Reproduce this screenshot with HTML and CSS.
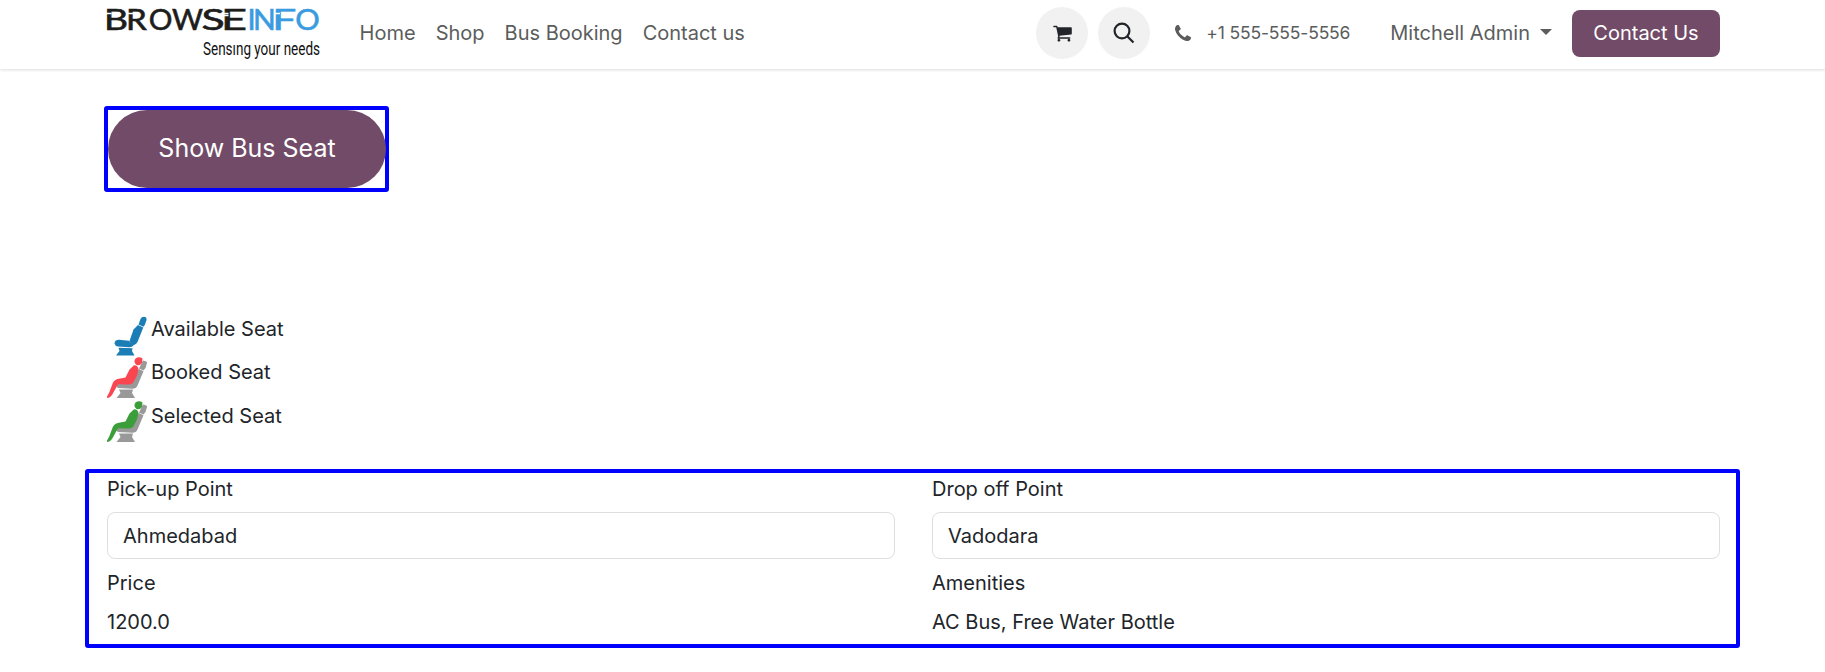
FILE: index.html
```html
<!DOCTYPE html>
<html lang="en">
<head>
<meta charset="utf-8">
<title>Bus Booking</title>
<link rel="stylesheet" href="styles.css">
</head>
<body>
<svg class="sprites" width="0" height="0">
  <symbol id="occupied" viewBox="0 0 40 42">
    <g fill="#999">
      <path d="M36 3.500Q40.500 4 40 6L38.500 11L36.500 13.500L32 11.500Z"/>
      <path d="M32 12L36.500 14.200L30.500 28.500Q29 32 25 31.800L11 31Q9 30 9.500 26.500L24 27Z"/>
      <path d="M12 32.500H26L25 36L28 41H9.500L13.500 36Z"/>
    </g>
    <g fill="currentColor">
      <path d="M28.500 1.500Q32-1 35.500 1.500L35 6Q33 9 29.500 8Q26 5.500 28.500 1.500Z"/>
      <path d="M27 8.300Q31.500 8.500 31.500 12.500L30 18.500L26 26Q24 28 19 27.500L11 27.200L5 38Q2.500 41.500 0 40.800L0 39.500L2 36L6 25.500Q8 22 13 21.500L18.500 20.500L22.500 12.500Z"/>
    </g>
  </symbol>
</svg>
<header class="site-header">
  <a class="brand">
    <svg width="214" height="56" viewBox="0 0 214 56">
      <g class="brand-name">
        <text x="-3" y="25.700" textLength="24" lengthAdjust="spacingAndGlyphs">B</text>
        <text x="18.900" y="25.700" textLength="20.800" lengthAdjust="spacingAndGlyphs">R</text>
        <text x="41.700" y="25.700" textLength="23.700" lengthAdjust="spacingAndGlyphs">O</text>
        <text x="65" y="25.700" textLength="31" lengthAdjust="spacingAndGlyphs">W</text>
        <text x="94.500" y="25.700" textLength="23.200" lengthAdjust="spacingAndGlyphs">S</text>
        <text x="114" y="25.700" textLength="26" lengthAdjust="spacingAndGlyphs">E</text>
      </g>
      <g class="brand-name brand-info">
        <text x="140.500" y="25.700">I</text>
        <text x="146.100" y="25.700" textLength="22.800" lengthAdjust="spacingAndGlyphs">N</text>
        <text x="165.200" y="25.700" textLength="24" lengthAdjust="spacingAndGlyphs">F</text>
        <text x="188.300" y="25.700" textLength="24.500" lengthAdjust="spacingAndGlyphs">O</text>
      </g>
      <path class="brand-cut" d="M-1 9.500H4.500M21 9.500H26M115 9.500H121.500M115 11.500H121.500M167 9.500H173"/>
      <text class="brand-tag" x="96" y="50.500" textLength="117" lengthAdjust="spacingAndGlyphs">Sensıng your needs</text>
    </svg>
  </a>
  <nav class="menu">
    <a>Home</a><a>Shop</a><a>Bus Booking</a><a>Contact us</a>
  </nav>
  <div class="tools">
    <a class="round">
      <svg width="19" height="20" viewBox="0 0 1664 1792"><path fill="#212529" d="M640 1536q0 52-38 90t-90 38-90-38-38-90 38-90 90-38 90 38 38 90zm896 0q0 52-38 90t-90 38-90-38-38-90 38-90 90-38 90 38 38 90zm128-1088v512q0 24-16.500 42.500t-40.500 21.500l-1044 122q13 60 13 70 0 16-24 64h920q26 0 45 19t19 45-19 45-45 19h-1024q-26 0-45-19t-19-45q0-11 8-31.500t16-36 21.500-40 15.500-29.500l-177-823h-204q-26 0-45-19t-19-45 19-45 45-19h256q16 0 28.500 6.500t19.500 15.500 13 24.500 8 26 5.500 29.500 4.500 26h1201q26 0 45 19t19 45z"/></svg>
    </a>
    <a class="round">
      <svg width="22" height="22" viewBox="0 0 22 22" fill="none" stroke="#212529" stroke-width="2.200"><circle cx="9" cy="9" r="7.400"/><path d="M14.200 14.200L20.500 20.500"/></svg>
    </a>
    <a class="phone">
      <svg width="16" height="16" viewBox="0 0 1408 1408"><path fill="currentColor" d="M1408 1112q0 27-10 70.500t-21 68.500q-21 50-122 106-94 51-186 51-27 0-53-3.500t-57.500-12.500-47-14.500-55.500-20.500-49-18q-98-35-175-83-127-79-264-216t-216-264q-48-77-83-175-3-9-18-49t-20.500-55.500-14.500-47-12.500-57.500-3.500-53q0-92 51-186 56-101 106-122 25-11 68.500-21t70.500-10q14 0 21 3 18 6 53 76 11 19 30 54t35 63.500 31 53.500q3 4 17.500 25t21.500 35.500 7 28.500q0 20-28.500 50t-62 55-62 53-28.500 46q0 9 5 22.500t8.500 20.500 14 24 11.500 19q76 137 174 235t235 174q2 1 19 11.500t24 14 20.500 8.500 22.500 5q18 0 46-28.500t53-62 55-62 50-28.500q14 0 28.500 7t35.500 21.500 25 17.500q25 15 53.500 31t63.500 35 54 30q70 35 76 53 3 7 3 21z"/></svg>
      <span>+1 555-555-5556</span>
    </a>
    <a class="user">Mitchell Admin<i class="caret"></i></a>
    <a class="cta">Contact Us</a>
  </div>
</header>
<main class="page">
  <div class="highlight show-seat"><button class="pill">Show Bus Seat</button></div>
  <ul class="legend">
    <li><svg class="seat available" viewBox="0 0 40 42"><g fill="currentColor"><path d="M33.500 3Q34.500 .800 37 .800Q40 1 39.500 4L38 8.500L36.500 10.800L31.500 8.500Z"/><path d="M31 9L36.300 11.500L30.500 26Q28.500 30 25 29L22.500 25L26.500 13.500Z"/><path d="M7.500 27.500Q7.500 24 12 23.800L22 24.800L26.500 29.500Q25 31.500 22 31.300L11 30.500Q8 30 7.500 27.500Z"/><path d="M11.500 31.800L25.500 32.200L25 35L27.500 39.500H9L12.500 35Z"/></g></svg><span>Available Seat</span></li>
    <li><svg class="seat booked"><use href="#occupied"/></svg><span>Booked Seat</span></li>
    <li><svg class="seat selected"><use href="#occupied"/></svg><span>Selected Seat</span></li>
  </ul>
  <section class="highlight details">
    <div class="col">
      <label>Pick-up Point</label><div class="field">Ahmedabad</div>
      <label>Price</label><p class="value">1200.0</p>
    </div>
    <div class="col">
      <label>Drop off Point</label><div class="field">Vadodara</div>
      <label>Amenities</label><p class="value">AC Bus, Free Water Bottle</p>
    </div>
  </section>
</main>
</body>
</html>
```
FILE: styles.css
```css
* { box-sizing: border-box; }
body { margin: 0; background: #fff; color: #212529; font: 20px/30px Inter, sans-serif; }
.sprites { display: none; }
.site-header { display: flex; align-items: center; height: 69px; padding: 0 105px 3px 107px; box-shadow: 0 1px 3px rgba(0,0,0,.14); color: #5b5d5d; }
.brand { display: block; height: 56px; margin-bottom: 2px; }
.brand svg { display: block; overflow: visible; }
.brand-name { font: 400 29px Lato, sans-serif; fill: #1d1d1b; stroke: #1d1d1b; stroke-width: .6; }
.brand-info { fill: #3a9be0; stroke: #3a9be0; }
.brand-cut { fill: none; stroke: #fff; stroke-width: 1.5; }
.brand-tag { font: 400 17.500px Roboto, sans-serif; fill: #111; }
.menu { display: flex; gap: 20px; margin-left: 38.6px; white-space: nowrap; }
.tools { display: flex; align-items: center; margin-left: auto; white-space: nowrap; }
.round { display: flex; align-items: center; justify-content: center; width: 52px; height: 52px; margin-right: 10px; border-radius: 50%; background: #f1f1f1; }
.phone { display: flex; align-items: center; gap: 15px; margin-left: 15px; font-size: 17.5px; letter-spacing: -.16px; }
.user { display: flex; align-items: center; margin-left: 40px; }
.caret { margin: -3px 0 0 10px; border: 6px solid transparent; border-top-color: currentColor; border-bottom: 0; }
.cta { margin-left: 20px; width: 148px; height: 47px; border-radius: 8px; background: #714b67; color: #fff; line-height: 47px; text-align: center; }
.page { padding: 37px 85px 0; }
.highlight { border: 4px solid #00f; border-radius: 3px; }
.show-seat { width: 285px; height: 86px; margin-left: 19px; }
.pill { display: block; width: 278px; height: 78px; padding: 0 0 2px; border: 0; border-radius: 39px; background: #714b67; color: #fff; font: 25px Inter, sans-serif; }
.legend { list-style: none; margin: 123px 0 0 22px; padding: 0; }
.legend li { display: flex; height: 43.400px; gap: 4px; }
.legend span { line-height: 28px; }
.seat { width: 40px; height: 42px; margin-top: -1px; overflow: visible; }
.available { margin-top: 1px; color: #1b7db5; }
.booked { color: #fa4650; }
.selected { color: #3b9e3b; }
.details { display: grid; grid-template-columns: 788px 788px; gap: 37px; height: 179px; margin-top: 23.800px; padding: 1px 18px; }
.col label { display: block; height: 38px; }
.field { height: 47px; margin-bottom: 9px; padding: 0 15px; border: 1px solid #dcdee0; border-radius: 8px; line-height: 46px; }
.value { margin: 1px 0 0; }
```
